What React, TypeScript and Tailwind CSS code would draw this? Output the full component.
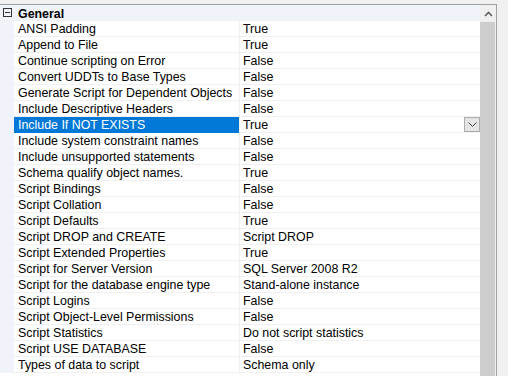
const rows: [string, string][] = [
  ["ANSI Padding", "True"],
  ["Append to File", "True"],
  ["Continue scripting on Error", "False"],
  ["Convert UDDTs to Base Types", "False"],
  ["Generate Script for Dependent Objects", "False"],
  ["Include Descriptive Headers", "False"],
  ["Include If NOT EXISTS", "True"],
  ["Include system constraint names", "False"],
  ["Include unsupported statements", "False"],
  ["Schema qualify object names.", "True"],
  ["Script Bindings", "False"],
  ["Script Collation", "False"],
  ["Script Defaults", "True"],
  ["Script DROP and CREATE", "Script DROP"],
  ["Script Extended Properties", "True"],
  ["Script for Server Version", "SQL Server 2008 R2"],
  ["Script for the database engine type", "Stand-alone instance"],
  ["Script Logins", "False"],
  ["Script Object-Level Permissions", "False"],
  ["Script Statistics", "Do not script statistics"],
  ["Script USE DATABASE", "False"],
  ["Types of data to script", "Schema only"],
];

export default function App() {
  return (
    <div
      className="w-[508px] h-[376px] bg-[#f0f0f0] pt-1 overflow-hidden text-[12.4px] text-black"
      style={{ fontFamily: '"Liberation Sans", Arial, sans-serif' }}
    >
      <div className="w-[497px] h-[372px] border-t border-r border-[#a0a0a0] flex bg-white">
        {/* grid */}
        <div className="w-[480px] flex flex-col">
          <div className="h-4 flex items-center bg-[#f0f3f9] border-b border-[#f0f0f0]">
            <div className="w-[14px] flex justify-center">
              <div className="w-[9px] h-[9px] border border-[#333] flex items-center justify-center">
                <div className="w-[5px] h-px bg-[#333]" />
              </div>
            </div>
            <span className="pl-1 self-start pt-[2px] font-bold leading-[14px]">General</span>
          </div>
          {rows.map(([name, value]) => {
            const sel = name === "Include If NOT EXISTS";
            return (
              <div key={name} className="h-4 flex">
                <div className="w-[14px] bg-[#f0f3f9]" />
                <div
                  className={
                    "w-[226px] pl-1 pt-[2px] leading-[13px] whitespace-nowrap overflow-hidden border-r border-[#f0f0f0] " +
                    (sel ? "bg-[#0078d7] text-white" : "border-b")
                  }
                >
                  {name}
                </div>
                <div className="flex-1 pl-[3px] flex items-start justify-between whitespace-nowrap border-b border-[#f0f0f0]">
                  <span className="pt-[2px] leading-[13px]">{value}</span>
                  {sel && (
                    <div className="w-4 h-[15px] border border-[#adadad] bg-[#e5e5e5] flex items-center justify-center">
                      <svg width="9" height="5" viewBox="0 0 9 5" fill="none" stroke="#404040" strokeWidth="1">
                        <path d="M0.5 0.5 L4.5 4.5 L8.5 0.5" />
                      </svg>
                    </div>
                  )}
                </div>
              </div>
            );
          })}
        </div>
        {/* scrollbar */}
        <div className="w-4 flex flex-col bg-[#f0f0f0]">
          <div className="h-[17px] flex items-center justify-center">
            <svg width="9" height="6" viewBox="0 0 9 6" fill="none" stroke="#606060" strokeWidth="1.6">
              <path d="M1 5 L4.5 1.5 L8 5" />
            </svg>
          </div>
          <div className="flex-1 mr-[1px] bg-[#cdcdcd]" />
        </div>
      </div>
    </div>
  );
}
